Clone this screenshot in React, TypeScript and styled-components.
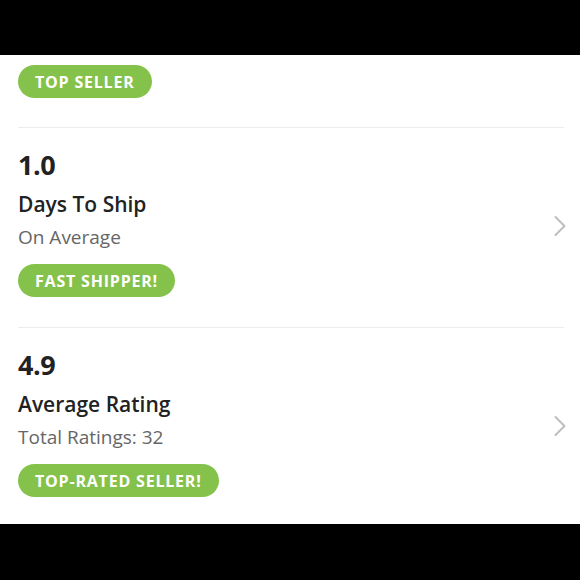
import styled, { createGlobalStyle } from "styled-components"

const GlobalStyle = createGlobalStyle`
  html, body {
    margin: 0;
    padding: 0;
    background: #000;
  }
  body {
    font-family: "Open Sans", Lato, sans-serif;
    -webkit-font-smoothing: antialiased;
  }
`

const sections = [
  { value: "1.0", title: "Days To Ship", sub: "On Average", badge: "FAST SHIPPER!" },
  { value: "4.9", title: "Average Rating", sub: "Total Ratings: 32", badge: "TOP-RATED SELLER!" },
]

export default function App () {
  return (
    <>
      <GlobalStyle />
      <Screen>
        <Bar height={55} />
        <Content>
          <TopBlock>
            <Badge>TOP SELLER</Badge>
          </TopBlock>
          {sections.map(s => (
            <StatRow key={s.title}>
              <StatInfo>
                <Value>{s.value}</Value>
                <Title>{s.title}</Title>
                <Sub>{s.sub}</Sub>
                <Badge>{s.badge}</Badge>
              </StatInfo>
              <Chevron />
            </StatRow>
          ))}
        </Content>
        <Bar height={56} />
      </Screen>
    </>
  )
}

const Chevron = () => (
  <ChevronWrap>
    <svg width="14" height="22" viewBox="0 0 14 22" fill="none">
      <path d="M2.5 2l9 9-9 9" stroke="#bdbdbd" strokeWidth="2" strokeLinecap="round" strokeLinejoin="round" />
    </svg>
  </ChevronWrap>
)

const Screen = styled.div`
  width: 580px;
  height: 580px;
  display: flex;
  flex-direction: column;
  background: #000;
`
const Bar = styled.div<{ height: number }>`
  height: ${p => p.height}px;
  flex-shrink: 0;
  background: #000;
`
const Content = styled.div`
  flex: 1;
  min-height: 0;
  overflow: hidden;
  background: #fff;
  padding: 0 16px 0 18px;
  display: flex;
  flex-direction: column;
`
const TopBlock = styled.div`
  flex-shrink: 0;
  padding: 10px 0 29px;
  border-bottom: 1px solid #ececec;
`
const StatRow = styled.div`
  flex-shrink: 0;
  display: flex;
  align-items: center;
  padding: 21px 0 30px;
  border-bottom: 1px solid #ececec;
  &:last-child {
    border-bottom: none;
  }
`
const StatInfo = styled.div`
  flex: 1;
  display: flex;
  flex-direction: column;
  align-items: flex-start;
`
const Value = styled.div`
  font-size: 27px;
  line-height: 32px;
  font-weight: 700;
  letter-spacing: -0.5px;
  color: #222;
`
const Title = styled.div`
  margin-top: 10px;
  font-size: 21px;
  line-height: 27px;
  font-weight: 600;
  color: #222;
`
const Sub = styled.div`
  margin-top: 7px;
  font-size: 19px;
  line-height: 25px;
  color: #666;
`
const Badge = styled.div`
  ${StatInfo} & {
    margin-top: 14px;
  }
  height: 33px;
  padding: 0 17px;
  border-radius: 17px;
  background: #85c24b;
  color: #fff;
  font-size: 16px;
  font-weight: 700;
  letter-spacing: 0.8px;
  display: inline-flex;
  align-items: center;
`
const ChevronWrap = styled.div`
  width: 20px;
  margin: 6px -3px 0 0;
  display: flex;
  justify-content: flex-end;
`
